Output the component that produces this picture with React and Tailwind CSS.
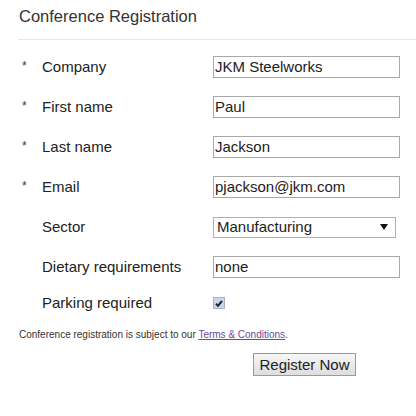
import React from 'react';

const fields = [
  { label: 'Company', value: 'JKM Steelworks', required: true },
  { label: 'First name', value: 'Paul', required: true },
  { label: 'Last name', value: 'Jackson', required: true },
  { label: 'Email', value: 'pjackson@jkm.com', required: true },
];

function Row({ required, label, children, className = 'h-[40px]' }) {
  return (
    <div className={`flex items-center ${className}`}>
      <span className="w-[24px] pl-[4px] text-[12px] self-center -mt-[3px] text-[#333]">
        {required ? '*' : ''}
      </span>
      <label className="w-[171px] text-[15px] text-[#222]">{label}</label>
      {children}
    </div>
  );
}

export default function App() {
  return (
    <div className="w-[416px] h-[416px] bg-white font-['Liberation_Sans',Arial,sans-serif] text-[#333]">
      <div className="pl-[18px]">
        <h1 className="pl-px pt-[7px] pb-[13px] text-[16.5px] leading-[19px] text-[#333]">
          Conference Registration
        </h1>
        <div className="border-t border-[#e6e6e6]" />

        <form className="mt-[7px]" onSubmit={(e) => e.preventDefault()}>
          {fields.map((f) => (
            <Row key={f.label} required={f.required} label={f.label}>
              <input
                type="text"
                defaultValue={f.value}
                className="w-[187px] h-[22px] border border-[#a9a9a9] px-px text-[15px] text-[#222] outline-none"
              />
            </Row>
          ))}

          <Row label="Sector">
            <div className="w-[183px] h-[21px] border border-[#b0b0b0] bg-white flex items-center justify-between pl-[3px] pr-[7px] text-[15px] text-[#222]">
              <span>Manufacturing</span>
              <svg width="8" height="6" viewBox="0 0 8 6">
                <polygon points="0,0 8,0 4,6" fill="#111" />
              </svg>
            </div>
          </Row>

          <Row label="Dietary requirements">
            <input
              type="text"
              defaultValue="none"
              className="w-[187px] h-[22px] border border-[#a9a9a9] px-px text-[15px] text-[#222] outline-none"
            />
          </Row>

          <Row label="Parking required" className="h-[32px]">
            <div className="w-[12px] h-[12px] border border-[#a7b2c8] bg-[#ccd4e8] flex items-center justify-center">
              <svg width="8" height="7" viewBox="0 0 8 7">
                <path d="M1 3.8 L3 5.8 L7 1" stroke="#1e2433" strokeWidth="2" fill="none" />
              </svg>
            </div>
          </Row>

          <p className="mt-[10px] pl-px text-[10px] leading-[12px] text-[#333]">
            Conference registration is subject to our{' '}
            <a href="#" className="text-[#6a4a9c] underline">Terms &amp; Conditions</a>.
          </p>

          <button
            type="submit"
            className="mt-[12px] ml-[235px] w-[103px] h-[23px] border border-[#9a9a9a] bg-gradient-to-b from-[#f7f7f7] to-[#dddddd] text-[15px] text-[#222] leading-none"
          >
            Register Now
          </button>
        </form>
      </div>
    </div>
  );
}
